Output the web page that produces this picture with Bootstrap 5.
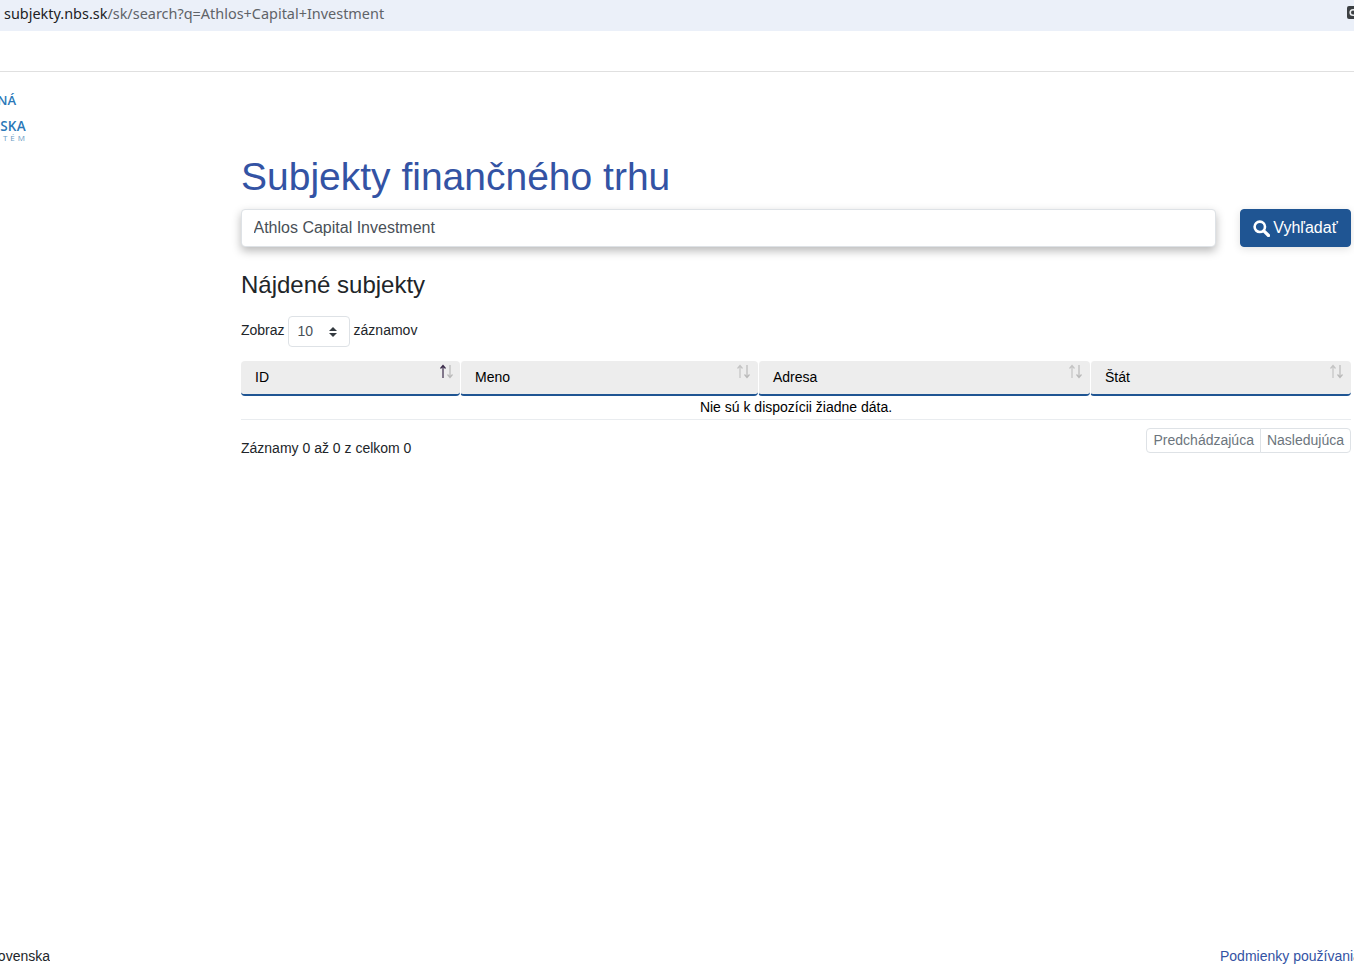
<!DOCTYPE html>
<html lang="sk">
<head>
<meta charset="utf-8">
<title>Subjekty finančného trhu</title>
<link href="https://cdn.jsdelivr.net/npm/bootstrap@5.3.0/dist/css/bootstrap.min.css" rel="stylesheet">
<style>
html,body{height:100%;overflow:hidden}
body{font-family:"Liberation Sans",Arial,sans-serif;font-size:14px;color:#212529;background:#fff}
.page-shell{height:974px}
.url-strip{height:31px;background:#ebf0f9;font-family:"Noto Sans","Noto Sans CJK SC",sans-serif;font-size:14.45px;line-height:28px;padding-left:4px;color:#5f6368;white-space:nowrap}
.url-strip b{font-weight:400;color:#202124}
.ext-icon{width:7px;height:13px;background:#3c4043;border-radius:2px 0 0 2px;margin-top:6px;overflow:hidden;line-height:0}
.top-strip{height:41px;border-bottom:1px solid #e0e0e0}
.logo-col{width:241px;flex:0 0 241px;padding-top:21px}
.logo-clip{width:26px;overflow:hidden;display:flex;flex-direction:column;align-items:flex-end;color:#2a78b8;font-family:"Open Sans",sans-serif;font-weight:600;white-space:nowrap;line-height:1}
.logo-a{font-size:13px;margin-bottom:12px;margin-right:10px;height:14px;line-height:14px}
.logo-b{font-size:13.5px;letter-spacing:.3px;height:14px;line-height:14px}
.logo-c{font-size:8px;font-weight:400;letter-spacing:3px;margin-right:-2px;color:#6a9cc4;height:9px;line-height:9px}
.content-col{width:1110px;flex:0 0 1110px;padding-top:81px}
.title-main{font-size:39px;line-height:48px;color:#3353a4;font-weight:400;margin:0 0 8px}
.search-in{height:38px;width:975px;flex:0 0 975px;border-radius:4px;font-size:16px;color:#495057;padding:6px 12px 6px 11.5px;font-family:inherit;box-shadow:0 4px 10px rgba(0,0,0,.28)}
.search-go{width:111px;height:38px;margin-left:24px;background:#1f5593;border-color:#1f5593;color:#fff;font-size:16px;padding:0;border-radius:4px;box-shadow:0 2px 8px rgba(0,0,0,.12)}
.search-go svg{margin-right:3px}
.sub-title{font-size:24px;line-height:29px;font-weight:400;margin:23px 0 17px}
.len-row{height:31px;margin-bottom:14px;line-height:29px}
.len-select{width:62px;height:31px;padding:2px 8px 2px 9px;font-size:14px;color:#495057;margin:0 4px 0 3px;background-size:10px 12px;background-position:right 11px center;background-image:url("data:image/svg+xml,%3csvg xmlns='http://www.w3.org/2000/svg' viewBox='0 0 10 12'%3e%3cpath fill='%23343a40' d='M5 1l4 4H1zM5 11l4-4H1z'/%3e%3c/svg%3e");border-radius:4px}
.data-grid{width:1110px;table-layout:fixed;border-collapse:separate;border-spacing:0;margin:0}
.data-grid th{position:relative;height:35px;background:#ededed;border-bottom:2px solid #1f5593;border-left:1px solid #fff;border-radius:4px;font-weight:400;color:#000;padding:6px 14px 0;line-height:20px;vertical-align:top}
.data-grid th:first-child{border-left:0}
.sort-arrows{position:absolute;top:3px;right:8px;width:14px;height:15px}
.data-grid th:first-child .sort-arrows{right:7px}
.data-grid td{text-align:center;color:#000;height:24px;padding:0;line-height:22px;border-bottom:1px solid #e9ecef;border-top:0;vertical-align:top}
.foot-row{margin-top:8px}
.info-text{padding-top:10px;line-height:20px}
.pager-box{margin:0}
.pager-box .page-link{font-size:14px;line-height:16px;padding:3px 6px 4px 6px;color:#6c757d;background:#fff;border-color:#dee2e6;height:25px}
.pager-box .page-item:first-child .page-link,.pager-box .page-item:last-child .page-link{border-radius:4px}
.pager-box .page-item:first-child .page-link{padding-left:7px;border-top-right-radius:0;border-bottom-right-radius:0}
.pager-box .page-item:last-child .page-link{border-top-left-radius:0;border-bottom-left-radius:0}
.site-foot{height:40px;line-height:20px;padding-top:12px}
.foot-left{width:50px;overflow:hidden;display:flex;justify-content:flex-end;white-space:nowrap}
.foot-right{width:134px;overflow:hidden;white-space:nowrap;color:#3353a4;text-decoration:none}
</style>
</head>
<body>
<div class="page-shell d-flex flex-column">
  <div class="url-strip d-flex justify-content-between">
    <span><b>subjekty.nbs.sk</b>/sk/search?q=Athlos+Capital+Investment</span>
    <span class="ext-icon"><svg width="7" height="13" viewBox="0 0 7 13"><circle cx="6" cy="6.5" r="2.8" fill="none" stroke="#e8eaed" stroke-width="1.6"/></svg></span>
  </div>
  <div class="top-strip"></div>
  <div class="d-flex flex-grow-1">
    <div class="logo-col">
      <div class="logo-clip">
        <span class="logo-a">NÁRODNÁ</span>
        <span class="logo-b">SLOVENSKA</span>
        <span class="logo-c">EUROSYSTÉM</span>
      </div>
    </div>
    <main class="content-col">
      <h1 class="title-main">Subjekty finančného trhu</h1>
      <div class="d-flex">
        <input class="form-control search-in" type="text" value="Athlos Capital Investment" aria-label="Hľadať">
        <button class="btn search-go d-flex align-items-center justify-content-center" type="button">
          <svg width="17" height="17" viewBox="0 0 17 17" class="flex-shrink-0"><circle cx="6.8" cy="6.8" r="5.2" fill="none" stroke="#fff" stroke-width="2.6"/><path d="M10.8 10.8l4.7 4.7" stroke="#fff" stroke-width="3.2" stroke-linecap="round"/></svg>Vyhľadať
        </button>
      </div>
      <h2 class="sub-title">Nájdené subjekty</h2>
      <div class="len-row d-flex align-items-start">
        <span>Zobraz</span>
        <select class="form-select len-select" aria-label="Počet záznamov"><option>10</option><option>25</option><option>50</option></select>
        <span>záznamov</span>
      </div>
      <table class="data-grid">
        <colgroup><col style="width:219px"><col style="width:298px"><col style="width:332px"><col style="width:261px"></colgroup>
        <thead>
          <tr>
            <th>ID<svg class="sort-arrows" viewBox="0 0 14 15"><path d="M4 14V2M1.5 4.5L4 1.5l2.5 3" fill="none" stroke="#3a2a4a" stroke-width="1.2"/><path d="M11 1v12M8.5 10.5L11 13.5l2.5-3" fill="none" stroke="#b9b9b9" stroke-width="1.2"/></svg></th>
            <th>Meno<svg class="sort-arrows" viewBox="0 0 14 15"><path d="M4 14V2M1.5 4.5L4 1.5l2.5 3" fill="none" stroke="#c4c4c4" stroke-width="1.2"/><path d="M11 1v12M8.5 10.5L11 13.5l2.5-3" fill="none" stroke="#b9b9b9" stroke-width="1.2"/></svg></th>
            <th>Adresa<svg class="sort-arrows" viewBox="0 0 14 15"><path d="M4 14V2M1.5 4.5L4 1.5l2.5 3" fill="none" stroke="#c4c4c4" stroke-width="1.2"/><path d="M11 1v12M8.5 10.5L11 13.5l2.5-3" fill="none" stroke="#b9b9b9" stroke-width="1.2"/></svg></th>
            <th>Štát<svg class="sort-arrows" viewBox="0 0 14 15"><path d="M4 14V2M1.5 4.5L4 1.5l2.5 3" fill="none" stroke="#c4c4c4" stroke-width="1.2"/><path d="M11 1v12M8.5 10.5L11 13.5l2.5-3" fill="none" stroke="#b9b9b9" stroke-width="1.2"/></svg></th>
          </tr>
        </thead>
        <tbody>
          <tr><td colspan="4">Nie sú k dispozícii žiadne dáta.</td></tr>
        </tbody>
      </table>
      <div class="foot-row d-flex justify-content-between align-items-start">
        <div class="info-text">Záznamy 0 až 0 z celkom 0</div>
        <ul class="pagination pager-box">
          <li class="page-item disabled"><span class="page-link">Predchádzajúca</span></li>
          <li class="page-item disabled"><span class="page-link">Nasledujúca</span></li>
        </ul>
      </div>
    </main>
  </div>
  <footer class="site-foot d-flex justify-content-between">
    <div class="foot-left"><span>Národná banka Slovenska</span></div>
    <a class="foot-right" href="#">Podmienky používania</a>
  </footer>
</div>
<script src="https://cdn.jsdelivr.net/npm/bootstrap@5.3.0/dist/js/bootstrap.bundle.min.js"></script>
</body>
</html>
